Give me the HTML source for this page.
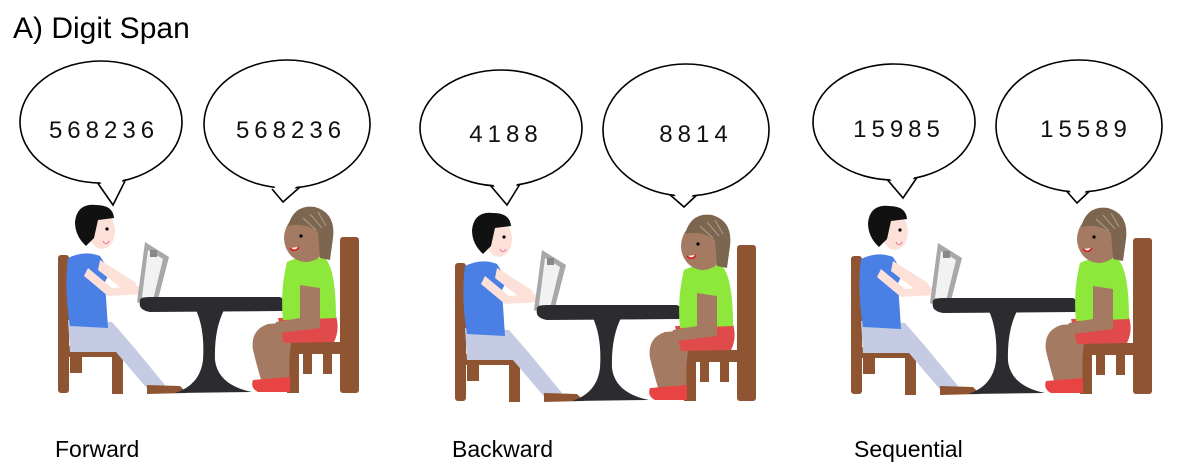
<!DOCTYPE html>
<html><head><style>
html,body{margin:0;padding:0;background:#fff;width:1188px;height:476px;overflow:hidden}
svg{display:block}
text{font-family:"Liberation Sans",sans-serif}
</style></head><body>
<svg width="1188" height="476" viewBox="0 0 1188 476" xmlns="http://www.w3.org/2000/svg">
<defs>
<g id="scene">
  <rect x="58" y="255" width="11" height="138" fill="#8f5533" rx="3"/>
  <rect x="70" y="355" width="12" height="18" fill="#8f5533"/>
  <rect x="58" y="346" width="67" height="11" fill="#8f5533"/>
  <rect x="112" y="356" width="11" height="38" fill="#8f5533"/>
  <path d="M68 320 L112 322 L132 345 L165 385 L150 392 L116 352 L70 352 Z" fill="#c4cbe2"/>
  <path d="M147 385 L180 386 L187 393 L147 394 Z" fill="#8f5533"/>
  <path d="M68 258 Q85 250 100 256 L110 272 L105 282 L108 328 L70 326 Q64 290 68 258 Z" fill="#4a7fe6"/>
  <path d="M88 268 L112 288 L140 286 L142 294 L108 296 L84 276 Z" fill="#fde1d8"/>
  <path d="M100 260 L135 282 L138 290 L125 291 L98 270 Z" fill="#fde1d8"/>
  <ellipse cx="102" cy="231" rx="13" ry="18" fill="#fde1d8"/>
  <path d="M75 222 Q77 203 96 205 Q113 205 114 218 L98 220 L94 238 L86 246 Q75 236 75 222 Z" fill="#111"/>
  <circle cx="107" cy="229" r="1.6" fill="#000"/>
  <path d="M103 241 Q106 246 109 241" stroke="#f08aa0" stroke-width="1.5" fill="#fff"/>
  <path d="M137 302 L145 242 L169 257 L155 311 Z" fill="#a8a8a8"/>
  <path d="M142 297 L148 250 L163 259 L152 304 Z" fill="#f2f2f2"/>
  <rect x="150" y="250" width="7" height="7" fill="#888"/>
  <path d="M140 302 Q138 297 150 297 L280 297 Q290 302 282 311 L150 312 Q138 310 140 302 Z" fill="#2c2c30"/>
  <path d="M196 310 L224 310 Q214 330 215 360 Q218 385 252 392 L175 393 Q200 385 203 360 Q205 330 196 310 Z" fill="#2c2c30"/>
  <rect x="340" y="237" width="19" height="156" fill="#8f5533" rx="3"/>
  <rect x="282" y="342" width="74" height="12" fill="#8f5533"/>
  <rect x="287" y="352" width="12" height="41" fill="#8f5533"/>
  <rect x="303" y="352" width="9" height="22" fill="#8f5533"/>
  <rect x="323" y="352" width="9" height="22" fill="#8f5533"/>
  <path d="M280 323 L268 324 Q250 330 253 350 Q258 370 262 383 L290 384 Q288 355 292 338 Z" fill="#a57a62"/>
  <path d="M253 380 L290 377 L290 392 L258 392 Q250 388 253 380 Z" fill="#e84444"/>
  <path d="M278 318 L336 316 Q340 330 334 342 L284 343 Z" fill="#e04a4a"/>
  <path d="M287 262 Q300 255 325 258 Q336 270 336 318 L283 320 Q280 290 287 262 Z" fill="#8ee83c"/>
  <path d="M300 285 L320 288 L320 328 L280 333 Q272 330 276 322 L300 318 Z" fill="#a57a62"/>
  <ellipse cx="306" cy="238" rx="22" ry="24" fill="#a57a62"/>
  <path d="M288 226 Q294 204 315 207 Q336 213 333 238 L330 260 L320 258 L318 232 Q305 222 288 226 Z" fill="#7c6650"/>
  <path d="M303 218 L316 230 M310 214 L322 228 M318 212 L326 226" stroke="#a89684" stroke-width="1.2"/>
  <circle cx="301" cy="236" r="1.6" fill="#000"/>
  <path d="M290 248 Q295 253 299 247" stroke="#e01818" stroke-width="1.6" fill="#fff"/>
</g>
</defs>
<text x="13" y="38" font-size="30" fill="#000">A) Digit Span</text>

<g fill="#fff" stroke="#000" stroke-width="1.6">
  <path d="M97 182 L113 205 L125 181"/><ellipse cx="101" cy="122" rx="81" ry="61"/>
  <path d="M272 189 L283 202 L300 187"/><ellipse cx="287" cy="124" rx="83" ry="64"/>
  <path d="M490 185 L507 205 L520 184"/><ellipse cx="501" cy="128" rx="81" ry="58"/>
  <path d="M668 193 L684 207 L700 192"/><ellipse cx="686" cy="130" rx="83" ry="66"/>
  <path d="M885 177 L903 198 L918 176"/><ellipse cx="894" cy="122" rx="81" ry="58"/>
  <path d="M1062 186 L1077 203 L1096 185"/><ellipse cx="1079" cy="126" rx="83" ry="66"/>
</g>
<g fill="#fff" stroke="none">
  <path d="M99 180 L113 203 L123 179 Z"/><path d="M274 186 L283 200 L298 185 Z"/>
  <path d="M492 183 L507 203 L518 182 Z"/><path d="M670 190 L684 205 L698 189 Z"/>
  <path d="M887 175 L903 196 L916 174 Z"/><path d="M1064 183 L1077 201 L1094 182 Z"/>
</g>
<g font-size="24" fill="#111" text-anchor="middle" letter-spacing="5">
  <text x="104" y="138">568236</text>
  <text x="291" y="138">568236</text>
  <text x="506" y="142">4188</text>
  <text x="696" y="142">8814</text>
  <text x="899" y="137">15985</text>
  <text x="1086" y="137">15589</text>
</g>

<use href="#scene"/>
<use href="#scene" transform="translate(397,8)"/>
<use href="#scene" transform="translate(793,1)"/>

<g font-size="23" fill="#000">
  <text x="55" y="457">Forward</text>
  <text x="452" y="457">Backward</text>
  <text x="854" y="457">Sequential</text>
</g>
</svg>
</body></html>
